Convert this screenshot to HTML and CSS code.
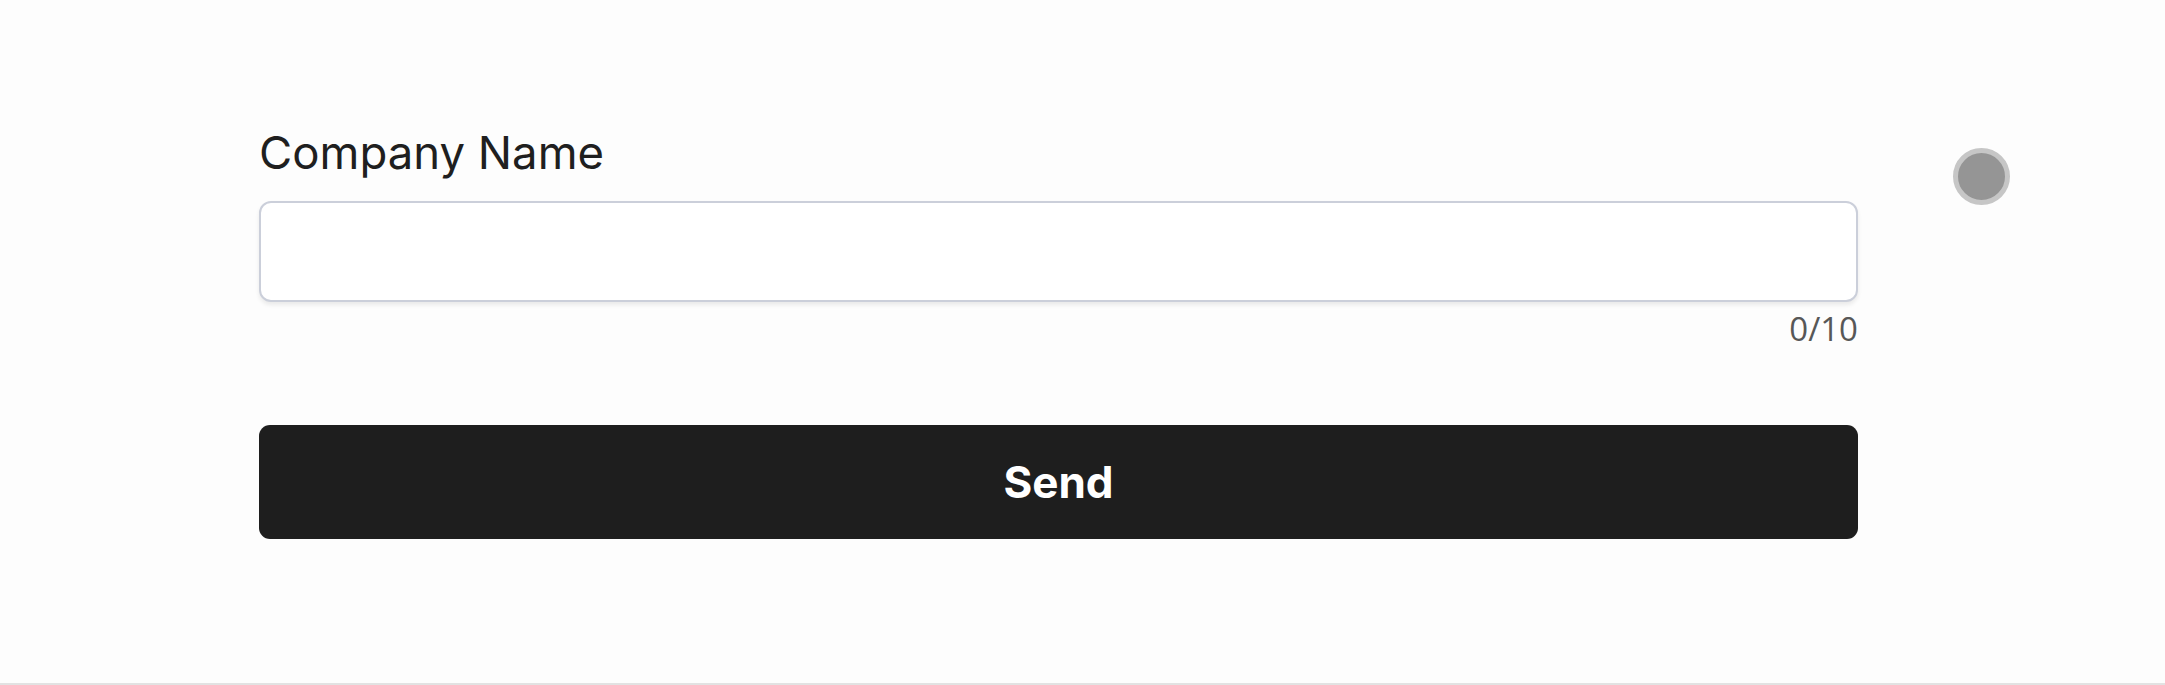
FILE: index.html
```html
<!DOCTYPE html>
<html lang="en">
<head>
<meta charset="utf-8">
<title>Company Name</title>
<link rel="stylesheet" href="styles.css">
</head>
<body>
<div class="page">
  <form class="form" onsubmit="return false">
    <label class="label" for="company">Company Name</label>
    <input class="field" id="company" type="text" maxlength="10">
    <div class="counter">0/10</div>
    <button class="send" type="submit">Send</button>
  </form>
  <div class="dot"></div>
</div>
</body>
</html>
```

FILE: styles.css
```css
html, body {
  margin: 0;
  padding: 0;
}
body {
  background: #fdfdfd;
  height: 685px;
  box-sizing: border-box;
  border-bottom: 2px solid #e2e2e2;
  font-family: Inter, "Liberation Sans", sans-serif;
}
.page {
  display: flex;
  align-items: flex-start;
  padding-left: 259px;
}
.form {
  width: 1599px;
  display: flex;
  flex-direction: column;
  padding-top: 125px;
}
.label {
  font-family: Inter, "Liberation Sans", sans-serif;
  font-size: 45.5px;
  line-height: 56px;
  color: #1f1f1f;
  font-weight: 400;
}
.field {
  margin-top: 20px;
  height: 101px;
  box-sizing: border-box;
  border: 2px solid #cbcfda;
  border-radius: 12px;
  background: #ffffff;
  box-shadow: 0 3px 4px rgba(0, 0, 0, 0.08);
  outline: none;
  font-size: 36px;
  padding: 0 20px;
}
.counter {
  margin-top: 5px;
  align-self: flex-end;
  font-family: "Open Sans", "Noto Sans", sans-serif;
  font-size: 33px;
  line-height: 44px;
  color: #575757;
}
.send {
  margin-top: 74px;
  height: 114px;
  border: none;
  border-radius: 11px;
  background: #1e1e1e;
  color: #ffffff;
  font-family: Inter, "Liberation Sans", sans-serif;
  font-weight: 700;
  font-size: 44px;
  cursor: pointer;
}
.dot {
  margin-left: 95px;
  margin-top: 148px;
  width: 47px;
  height: 47px;
  border-radius: 50%;
  background: #959595;
  border: 5px solid #c6c6c6;
}
```
